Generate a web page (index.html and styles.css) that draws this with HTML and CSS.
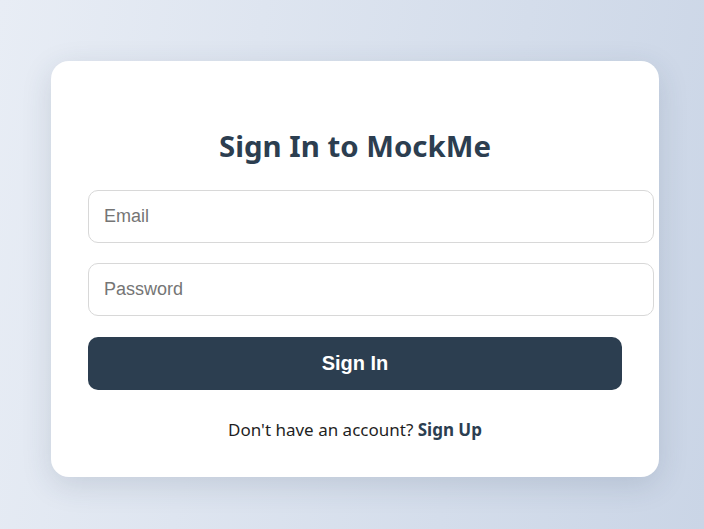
FILE: index.html
```
<!DOCTYPE html>
<html lang="en">
<head>
<meta charset="utf-8">
<title>Sign In to MockMe</title>
<link rel="stylesheet" href="styles.css">
</head>
<body>
<main class="page">
  <section class="card">
    <h2 class="title">Sign In to MockMe</h2>
    <form class="form">
      <input class="field" type="email" placeholder="Email">
      <input class="field" type="password" placeholder="Password">
      <button class="btn" type="button">Sign In</button>
    </form>
    <p class="switch">Don't have an account? <a class="link" href="#">Sign Up</a></p>
  </section>
</main>
</body>
</html>
```
FILE: styles.css
```
html, body {
  margin: 0;
  height: 100%;
}
body {
  background: linear-gradient(100deg, #e8edf5 0%, #cad5e6 100%);
  font-family: "Noto Sans", "Open Sans", sans-serif;
  overflow: hidden;
}
.page {
  box-sizing: border-box;
  height: 100%;
  padding: 61px 0 0 51px;
}
.card {
  width: 534px;
  height: 376px;
  padding: 20px 37px;
  background: #fff;
  border-radius: 18px;
  box-shadow: 0 8px 30px rgba(40, 60, 90, 0.15);
}
.title {
  margin: 45px 0 24px;
  text-align: center;
  font-size: 29.4px;
  line-height: 40px;
  font-weight: 700;
  color: #2c3e50;
}
.form {
  display: flex;
  flex-direction: column;
  align-items: flex-start;
}
.field {
  width: 100%;
  height: 51px;
  padding: 0 15px;
  margin: 0 0 20px;
  border: 1px solid #d8d8d8;
  border-radius: 10px;
  font-family: "Liberation Sans", Arial, sans-serif;
  font-size: 18px;
  color: #333;
  background: #fff;
  outline: none;
}
.field::placeholder {
  color: #757575;
}
.btn {
  width: 100%;
  height: 53px;
  margin-top: 1px;
  border: 0;
  border-radius: 10px;
  background: #2c3e50;
  color: #fff;
  font-family: "Liberation Sans", Arial, sans-serif;
  font-size: 20px;
  font-weight: 700;
  cursor: pointer;
}
.switch {
  margin: 28px 0 0;
  text-align: center;
  font-size: 17px;
  color: #1f1f1f;
}
.link {
  color: #2c3e50;
  font-weight: 700;
  text-decoration: none;
}
```
